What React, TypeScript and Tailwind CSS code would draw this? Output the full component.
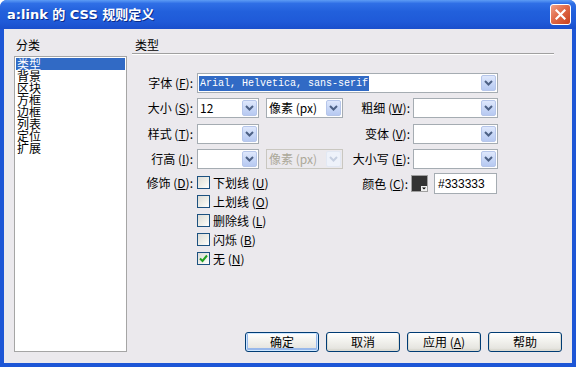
import React from "react";

const cjk = "font-['Noto_Sans_CJK_SC','Noto_Sans',sans-serif]";

function Chevron({ disabled }: { disabled?: boolean }) {
  return (
    <svg width="9" height="6" viewBox="0 0 9 6">
      <path d="M1 1 L4.5 4.5 L8 1" fill="none" stroke={disabled ? "#c6cfe0" : "#4d6185"} strokeWidth="2" />
    </svg>
  );
}

function Select({ className, value, disabled, selected }: { className: string; value?: string; disabled?: boolean; selected?: boolean }) {
  return (
    <div
      className={`flex h-[20px] shrink-0 border ${
        disabled ? "border-[#c9c7c0] bg-[#ebe9ed]" : "border-[#a5acb2] bg-white"
      } ${className}`}
    >
      <div className="flex min-w-0 flex-1 items-center overflow-hidden pl-[1px]">
        {value && selected ? (
          <span className="bg-[#316ac5] px-[1px] font-['Liberation_Mono',monospace] text-[10px] leading-[15px] text-white">
            {value}
          </span>
        ) : value ? (
          <span className={`pl-[1px] ${cjk} text-[12px] leading-[14px] ${disabled ? "text-[#aca899]" : "text-black"}`}>{value}</span>
        ) : null}
      </div>
      <div
        className={`my-[1px] mr-[1px] flex w-[15px] items-center justify-center rounded-[2px] border ${
          disabled
            ? "border-[#e2e8f3] bg-[#eef2fa]"
            : "border-[#b6c6ea] bg-[linear-gradient(180deg,#dfe8fc_0%,#c5d5f6_60%,#b7c9f1_100%)]"
        }`}
      >
        <Chevron disabled={disabled} />
      </div>
    </div>
  );
}

function Label({ className, text, k }: { className: string; text: string; k: string }) {
  return (
    <div className={`shrink-0 text-right ${cjk} text-[12px] leading-[14px] text-black ${className}`}>
      {text} (<u>{k}</u>):
    </div>
  );
}

function Check({ text, k, checked }: { text: string; k: string; checked?: boolean }) {
  return (
    <div className="flex h-[13px] items-center">
      <div className="flex h-[13px] w-[13px] items-center justify-center border border-[#1c5180] bg-[linear-gradient(135deg,#dcdcd7_0%,#f0f0ea_60%,#ffffff_100%)]">
        {checked && (
          <svg width="9" height="9" viewBox="0 0 9 9">
            <path d="M1 4.5 L3.5 7 L8 1.5" fill="none" stroke="#21a121" strokeWidth="2" />
          </svg>
        )}
      </div>
      <span className={`ml-[3px] ${cjk} text-[12px] leading-[13px] text-black`}>
        {text} (<u>{k}</u>)
      </span>
    </div>
  );
}

function Btn({ text, def }: { text: React.ReactNode; def?: boolean }) {
  return (
    <div
      className={`flex h-[20px] w-[74px] items-center justify-center rounded-[3px] border border-[#003c74] bg-[linear-gradient(180deg,#ffffff_0%,#f3f3ef_40%,#e6e5e0_85%,#d6d0c5_100%)] ${cjk} text-[12px] leading-[14px] text-black ${
        def ? "shadow-[inset_0_0_0_1px_#cee7ff,inset_0_-1px_0_2px_#98b8ea]" : "shadow-[inset_0_-1px_0_1px_#dcdbd3]"
      }`}
    >
      {text}
    </div>
  );
}

export default function App() {
  const cats = ["类型", "背景", "区块", "方框", "边框", "列表", "定位", "扩展"];
  return (
    <div className="flex h-[367px] w-[576px] flex-col overflow-hidden rounded-t-[7px] bg-[#1d56d6]">
      {/* Title bar */}
      <div className="flex h-[29px] shrink-0 items-center justify-between bg-[linear-gradient(180deg,#5d9cf5_0%,#2f6fe6_12%,#2260dc_40%,#1f5ad8_75%,#1a4fcc_100%)] pl-[7px] pr-[5px]">
        <span className="font-['DejaVu_Sans','Noto_Sans_CJK_SC',sans-serif] text-[13px] font-bold leading-[16px] text-white [text-shadow:1px_1px_0_#0a2a8a]">
          a:link 的 CSS 规则定义
        </span>
        <div className="flex h-[21px] w-[21px] items-center justify-center rounded-[3px] border border-white bg-[linear-gradient(135deg,#f0a088_0%,#e06a48_45%,#c8401d_100%)]">
          <svg width="11" height="11" viewBox="0 0 11 11">
            <path d="M1.5 1.5 L9.5 9.5 M9.5 1.5 L1.5 9.5" stroke="white" strokeWidth="2.2" strokeLinecap="square" />
          </svg>
        </div>
      </div>

      {/* Body */}
      <div className="mx-[4px] mb-[4px] flex flex-1 bg-[#ebe9ed] pb-[11px] pl-[10px] pr-[10px] pt-[8px]">
        {/* Left column */}
        <div className="flex w-[113px] shrink-0 flex-col">
          <div className={`h-[16px] pl-[2px] ${cjk} text-[12px] leading-[16px] text-black`}>分类</div>
          <div className="mt-[3px] flex-1 border border-[#a5a5a5] bg-white p-[1px]">
            {cats.map((c, i) => (
              <div
                key={c}
                className={`h-[12px] pl-[1px] ${cjk} text-[12px] leading-[12px] ${
                  i === 0 ? "bg-[#316ac5] text-white" : "text-black"
                }`}
              >
                {c}
              </div>
            ))}
          </div>
        </div>

        {/* Right column */}
        <div className="ml-[5px] flex w-[430px] flex-col">
          <div className={`h-[16px] pl-[3px] ${cjk} text-[12px] leading-[16px] text-black`}>类型</div>
          <div className="mr-[8px] h-[2px] border-t border-b border-t-[#a0a0a0] border-b-white" />

          {/* Row 1 */}
          <div className="mt-[18px] flex items-center">
            <Label className="w-[61px]" text="字体" k="F" />
            <div className="w-[4px]" />
            <Select className="w-[301px]" value="Arial, Helvetica, sans-serif" selected />
          </div>

          {/* Row 2 */}
          <div className="mt-[5px] flex items-center">
            <Label className="w-[61px]" text="大小" k="S" />
            <div className="w-[4px]" />
            <Select className="w-[62px]" value="12" />
            <div className="w-[7px]" />
            <Select className="w-[77px]" value="像素 (px)" />
            <Label className="w-[67px]" text="粗细" k="W" />
            <div className="w-[3px]" />
            <Select className="w-[85px]" />
          </div>

          {/* Row 3 */}
          <div className="mt-[6px] flex items-center">
            <Label className="w-[61px]" text="样式" k="T" />
            <div className="w-[4px]" />
            <Select className="w-[62px]" />
            <div className="w-[84px]" />
            <Label className="w-[67px]" text="变体" k="V" />
            <div className="w-[3px]" />
            <Select className="w-[85px]" />
          </div>

          {/* Row 4 */}
          <div className="mt-[5px] flex items-center">
            <Label className="w-[61px]" text="行高" k="I" />
            <div className="w-[4px]" />
            <Select className="w-[62px]" />
            <div className="w-[7px]" />
            <Select className="w-[77px]" value="像素 (px)" disabled />
            <Label className="w-[67px]" text="大小写" k="E" />
            <div className="w-[3px]" />
            <Select className="w-[85px]" />
          </div>

          {/* Decoration + colour */}
          <div className="mt-[4px] flex items-start">
            <div className="flex w-[61px] shrink-0 justify-end pt-[3px]">
              <Label className="" text="修饰" k="D" />
            </div>
            <div className="w-[4px]" />
            <div className="flex w-[146px] shrink-0 flex-col gap-[6px] pt-[3px]">
              <Check text="下划线" k="U" />
              <Check text="上划线" k="O" />
              <Check text="删除线" k="L" />
              <Check text="闪烁" k="B" />
              <Check text="无" k="N" checked />
            </div>
            <div className="flex h-[21px] w-[65px] shrink-0 items-center justify-end">
              <Label className="" text="颜色" k="C" />
            </div>
            <div className="w-[3px]" />
            <div className="mt-[2px] flex h-[17px] w-[17px] shrink-0 items-center justify-center border border-[#a0a0a0] bg-[#f0f0f0]">
              <svg width="15" height="15" viewBox="0 0 15 15">
                <rect x="0" y="0" width="15" height="15" fill="#333333" />
                <rect x="9" y="10" width="6" height="5" fill="#f0f0f0" />
                <path d="M10 11.5 L14 11.5 L12 13.5 Z" fill="#000" />
              </svg>
            </div>
            <div className="w-[6px]" />
            <div className="flex h-[21px] w-[63px] shrink-0 items-center border border-[#a5acb2] bg-white pl-[3px] font-['Liberation_Sans',sans-serif] text-[12px] leading-[14px] text-black">
              #333333
            </div>
          </div>

          {/* Buttons */}
          <div className="mt-auto flex justify-end gap-[7px]">
            <Btn text="确定" def />
            <Btn text="取消" />
            <Btn text={<span>应用 (<u>A</u>)</span>} />
            <Btn text="帮助" />
          </div>
        </div>
      </div>
    </div>
  );
}
